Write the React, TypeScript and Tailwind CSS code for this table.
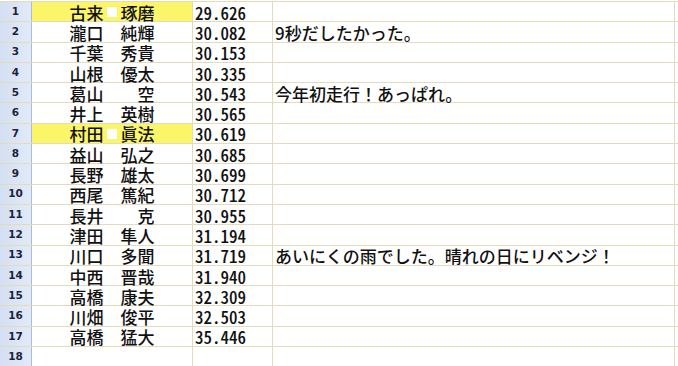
const rows: { no: number; name: string; time: string; note?: string; hl?: boolean }[] = [
  { no: 1, name: '古来　琢磨', time: '29.626', hl: true },
  { no: 2, name: '瀧口　純輝', time: '30.082', note: '9秒だしたかった。' },
  { no: 3, name: '千葉　秀貴', time: '30.153' },
  { no: 4, name: '山根　優太', time: '30.335' },
  { no: 5, name: '葛山　　空', time: '30.543', note: '今年初走行！あっぱれ。' },
  { no: 6, name: '井上　英樹', time: '30.565' },
  { no: 7, name: '村田　眞法', time: '30.619', hl: true },
  { no: 8, name: '益山　弘之', time: '30.685' },
  { no: 9, name: '長野　雄太', time: '30.699' },
  { no: 10, name: '西尾　篤紀', time: '30.712' },
  { no: 11, name: '長井　　克', time: '30.955' },
  { no: 12, name: '津田　隼人', time: '31.194' },
  { no: 13, name: '川口　多聞', time: '31.719', note: 'あいにくの雨でした。晴れの日にリベンジ！' },
  { no: 14, name: '中西　晋哉', time: '31.940' },
  { no: 15, name: '高橋　康夫', time: '32.309' },
  { no: 16, name: '川畑　俊平', time: '32.503' },
  { no: 17, name: '高橋　猛大', time: '35.446' },
  { no: 18, name: '', time: '' },
]

// names in the highlighted rows show the full-width space as a white box
function Name({ text, hl }: { text: string; hl?: boolean }) {
  if (!hl) return <>{text}</>
  const [a, b] = text.split('　')
  return (
    <>
      {a}
      <span className="inline-flex w-[17px] justify-center">
        <span className="inline-block w-[10px] h-[10px] bg-white" />
      </span>
      {b}
    </>
  )
}

export default function App() {
  return (
    <div
      className="w-[678px] h-[366px] overflow-hidden bg-white text-[#111] text-[17px] font-medium"
      style={{ fontFamily: '"Noto Sans CJK JP", "Noto Sans", sans-serif' }}
    >
      <div className="mt-[1px] border-t border-[#e3dbbc]">
        {rows.map((r) => (
          <div
            key={r.no}
            className="grid grid-cols-[32px_161px_80px_402px_1fr] h-[20.3px] border-b border-[#e3dbbc]"
          >
            <div className="flex items-center justify-center bg-gradient-to-r from-[#d3dff2] to-[#e2eaf7] border-r border-[#a9bddb] text-[10.5px] font-bold text-[#1c2340] [font-family:'DejaVu_Sans',sans-serif]">
              {r.no}
            </div>
            <div
              className={`flex items-center justify-center pt-[1px] leading-none whitespace-pre border-r border-[#e3dbbc] ${
                r.hl ? 'bg-[#fbf56a]' : ''
              }`}
            >
              <Name text={r.name} hl={r.hl} />
            </div>
            <div className="flex items-center pl-[2px] pt-[1px] leading-none border-r border-[#e3dbbc] [font-feature-settings:'hwid']">
              {r.time}
            </div>
            <div className="flex items-center pl-[2px] pt-[1px] leading-none whitespace-nowrap border-r border-[#e3dbbc]">
              {r.note}
            </div>
            <div />
          </div>
        ))}
      </div>
    </div>
  )
}
